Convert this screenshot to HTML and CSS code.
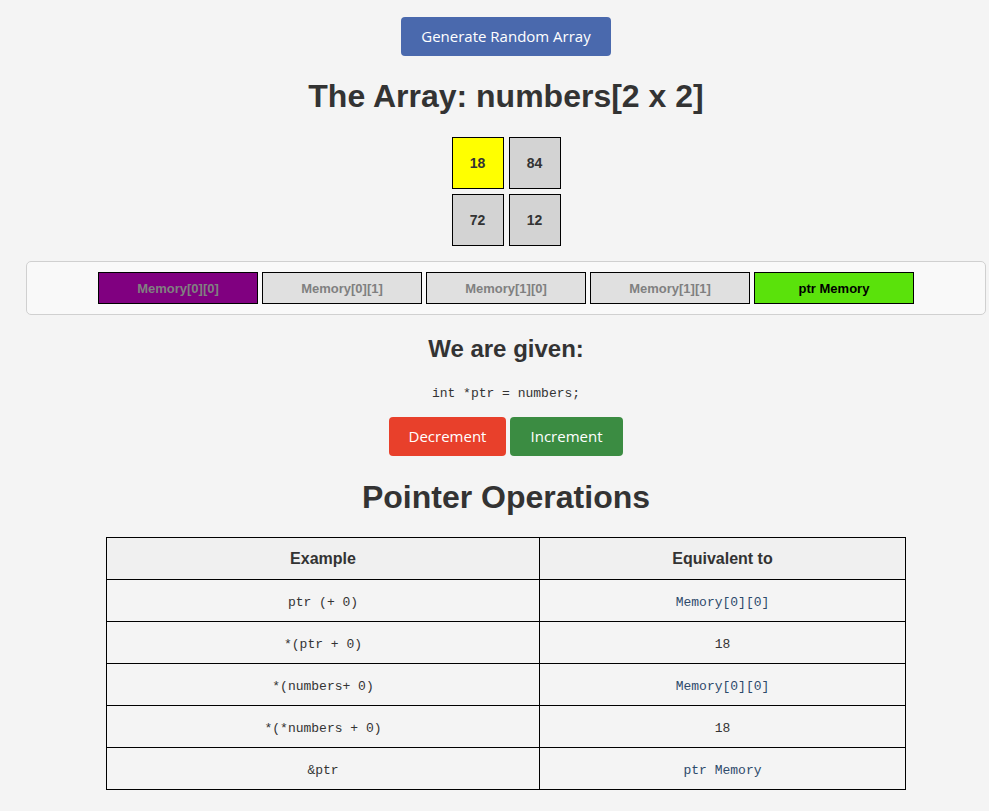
FILE: index.html
```html
<!DOCTYPE html>
<html>
<head>
<meta charset="utf-8">
<link rel="stylesheet" href="styles.css">
</head>
<body>
<div class="page">
  <div class="top">
    <button class="btn btn-blue">Generate Random Array</button>
  </div>
  <h1 class="title">The Array: numbers[2 x 2]</h1>
  <div class="grid">
    <div class="cell cell-active">18</div>
    <div class="cell">84</div>
    <div class="cell">72</div>
    <div class="cell">12</div>
  </div>
  <div class="memory">
    <div class="mem mem-purple">Memory[0][0]</div>
    <div class="mem">Memory[0][1]</div>
    <div class="mem">Memory[1][0]</div>
    <div class="mem">Memory[1][1]</div>
    <div class="mem mem-green">ptr Memory</div>
  </div>
  <h2 class="given">We are given:</h2>
  <div class="code-line"><code>int *ptr = numbers;</code></div>
  <div class="controls">
    <button class="btn btn-red">Decrement</button>
    <button class="btn btn-green">Increment</button>
  </div>
  <h1 class="ops">Pointer Operations</h1>
  <table class="table">
    <thead>
      <tr><th class="col1">Example</th><th>Equivalent to</th></tr>
    </thead>
    <tbody>
      <tr><td><code>ptr (+ 0)</code></td><td><code class="mem-ref">Memory[0][0]</code></td></tr>
      <tr><td><code>*(ptr + 0)</code></td><td><code>18</code></td></tr>
      <tr><td><code>*(numbers+ 0)</code></td><td><code class="mem-ref">Memory[0][0]</code></td></tr>
      <tr><td><code>*(*numbers + 0)</code></td><td><code>18</code></td></tr>
      <tr><td><code>&amp;ptr</code></td><td><code class="mem-ref">ptr Memory</code></td></tr>
    </tbody>
  </table>
</div>
</body>
</html>
```
FILE: styles.css
```css
html, body {
  margin: 0;
  padding: 0;
  background: #f4f4f4;
}
body {
  font-family: "Liberation Sans", Arial, sans-serif;
  color: #333;
}
.page {
  width: 960px;
  margin-left: 26px;
  display: flex;
  flex-direction: column;
  align-items: center;
  padding-top: 17px;
}
.top {
  display: flex;
  justify-content: center;
}
.btn {
  font-family: "Open Sans", "Noto Sans", sans-serif;
  font-size: 15px;
  line-height: 20px;
  color: #fff;
  border: none;
  border-radius: 4px;
  height: 39px;
  padding: 0 0 2px 0;
  cursor: pointer;
}
.btn-blue {
  background: #4a69ad;
  width: 210px;
}
.btn-red {
  background: #e8402b;
  width: 117px;
}
.btn-green {
  background: #3b8c42;
  width: 113px;
}
.title {
  font-size: 32px;
  font-weight: bold;
  margin: 22px 0 0 0;
  line-height: 37px;
}
.grid {
  display: grid;
  grid-template-columns: 52px 52px;
  grid-auto-rows: 52px;
  gap: 5px;
  margin-top: 22px;
}
.cell {
  box-sizing: border-box;
  border: 1px solid #000;
  background: #d3d3d3;
  display: flex;
  align-items: center;
  justify-content: center;
  font-weight: bold;
  font-size: 14px;
  color: #333;
}
.cell-active {
  background: #ffff00;
}
.memory {
  box-sizing: border-box;
  width: 960px;
  height: 54px;
  margin-top: 15px;
  border: 1px solid #d0d0d0;
  border-radius: 5px;
  background: #f9f9f9;
  display: flex;
  justify-content: center;
  align-items: center;
  gap: 4px;
}
.mem {
  box-sizing: border-box;
  width: 160px;
  height: 32px;
  border: 1px solid #000;
  background: #e0e0e0;
  color: #808080;
  font-weight: bold;
  font-size: 13px;
  display: flex;
  align-items: center;
  justify-content: center;
}
.mem-purple {
  background: #800080;
}
.mem-green {
  background: #5ae20b;
  color: #000;
}
.given {
  font-size: 24px;
  font-weight: bold;
  margin: 20px 0 0 0;
  line-height: 28px;
}
.code-line {
  margin-top: 20px;
  line-height: 18px;
}
code {
  font-family: "Liberation Mono", "DejaVu Sans Mono", monospace;
  font-size: 13px;
  color: #333;
}
.controls {
  display: flex;
  gap: 4px;
  margin-top: 14px;
}
.ops {
  font-size: 32px;
  font-weight: bold;
  margin: 23px 0 0 0;
  line-height: 37px;
}
.table {
  margin-top: 21px;
  width: 800px;
  border-collapse: collapse;
}
.table th, .table td {
  border: 1px solid #000;
  height: 41px;
  padding: 0;
  text-align: center;
}
.table th {
  background: #f0f0f0;
  font-size: 16px;
  font-weight: bold;
  color: #333;
}
.col1 {
  width: 432px;
}
.mem-ref {
  color: #2d4a6b;
}
```
